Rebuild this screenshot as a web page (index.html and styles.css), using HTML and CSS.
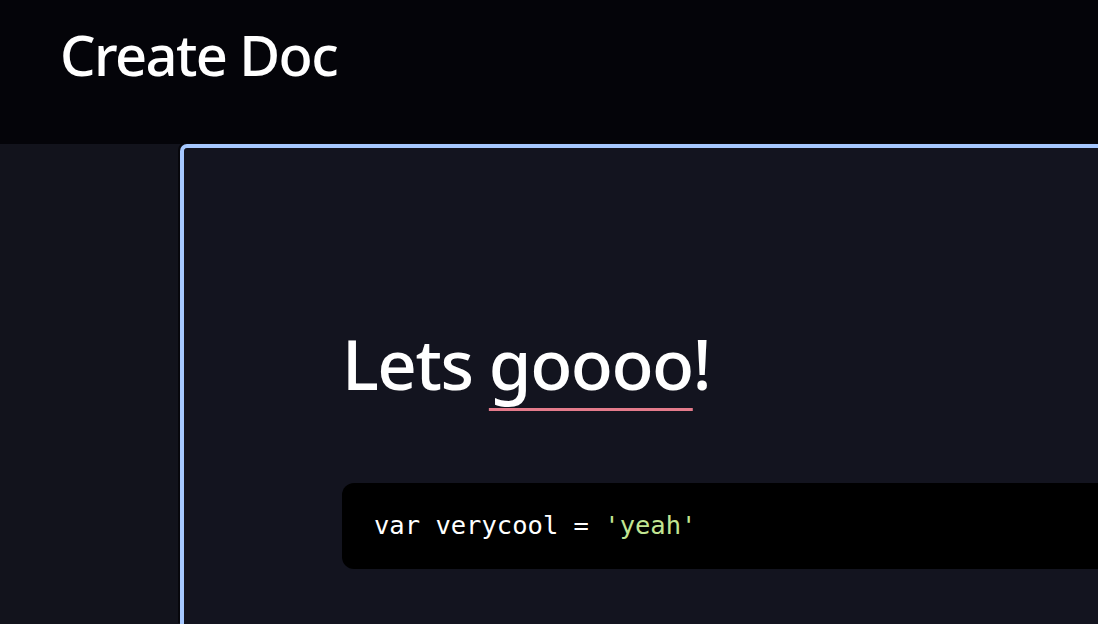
FILE: index.html
```html
<!DOCTYPE html>
<html>
<head>
<meta charset="utf-8">
<link rel="stylesheet" href="styles.css">
</head>
<body>
<header class="topbar">
  <h1 class="title">Create Doc</h1>
</header>
<div class="main">
  <aside class="side"></aside>
  <section class="card">
    <h2 class="doc-heading">Lets <span class="mark">goooo</span>!</h2>
    <pre class="code"><code>var verycool = <span class="str">'yeah'</span></code></pre>
  </section>
</div>
</body>
</html>
```
FILE: styles.css
```css
html, body {
  margin: 0;
  padding: 0;
  height: 100%;
  overflow: hidden;
}
body {
  background: #12131c;
  font-family: "Noto Sans", "Open Sans", sans-serif;
  color: #fff;
  display: flex;
  flex-direction: column;
}
.topbar {
  background: #040409;
  height: 144px;
  padding: 0 0 0 60px;
  box-sizing: border-box;
  flex: none;
}
.title {
  margin: 0;
  padding-top: 21px;
  font-size: 56px;
  font-weight: 500;
  letter-spacing: -1.6px;
  line-height: 1.2;
}
.main {
  flex: 1;
  display: flex;
}
.side {
  width: 180px;
  flex: none;
}
.card {
  flex: 1;
  background: #13141f;
  border-top: 4px solid #a6c8ff;
  border-left: 4px solid #a6c8ff;
  border-top-left-radius: 7px;
  box-shadow: -2px -1px 0 #07070c;
  padding: 174px 0 0 158px;
}
.doc-heading {
  margin: 0;
  font-size: 69px;
  font-weight: 500;
  letter-spacing: -1.5px;
  line-height: 1.2;
}
.mark {
  text-decoration: underline;
  text-decoration-color: #e47b8b;
  text-decoration-thickness: 3px;
  text-decoration-skip-ink: none;
  text-underline-offset: 18px;
}
.code {
  margin: 78px 0 0 0;
  background: #000;
  border-radius: 12px 0 0 12px;
  padding: 25px 32px 26px;
  font-family: "DejaVu Sans Mono", monospace;
  font-size: 25.5px;
  line-height: 35px;
  color: #fff;
}
.str {
  color: #c2e592;
}
```
